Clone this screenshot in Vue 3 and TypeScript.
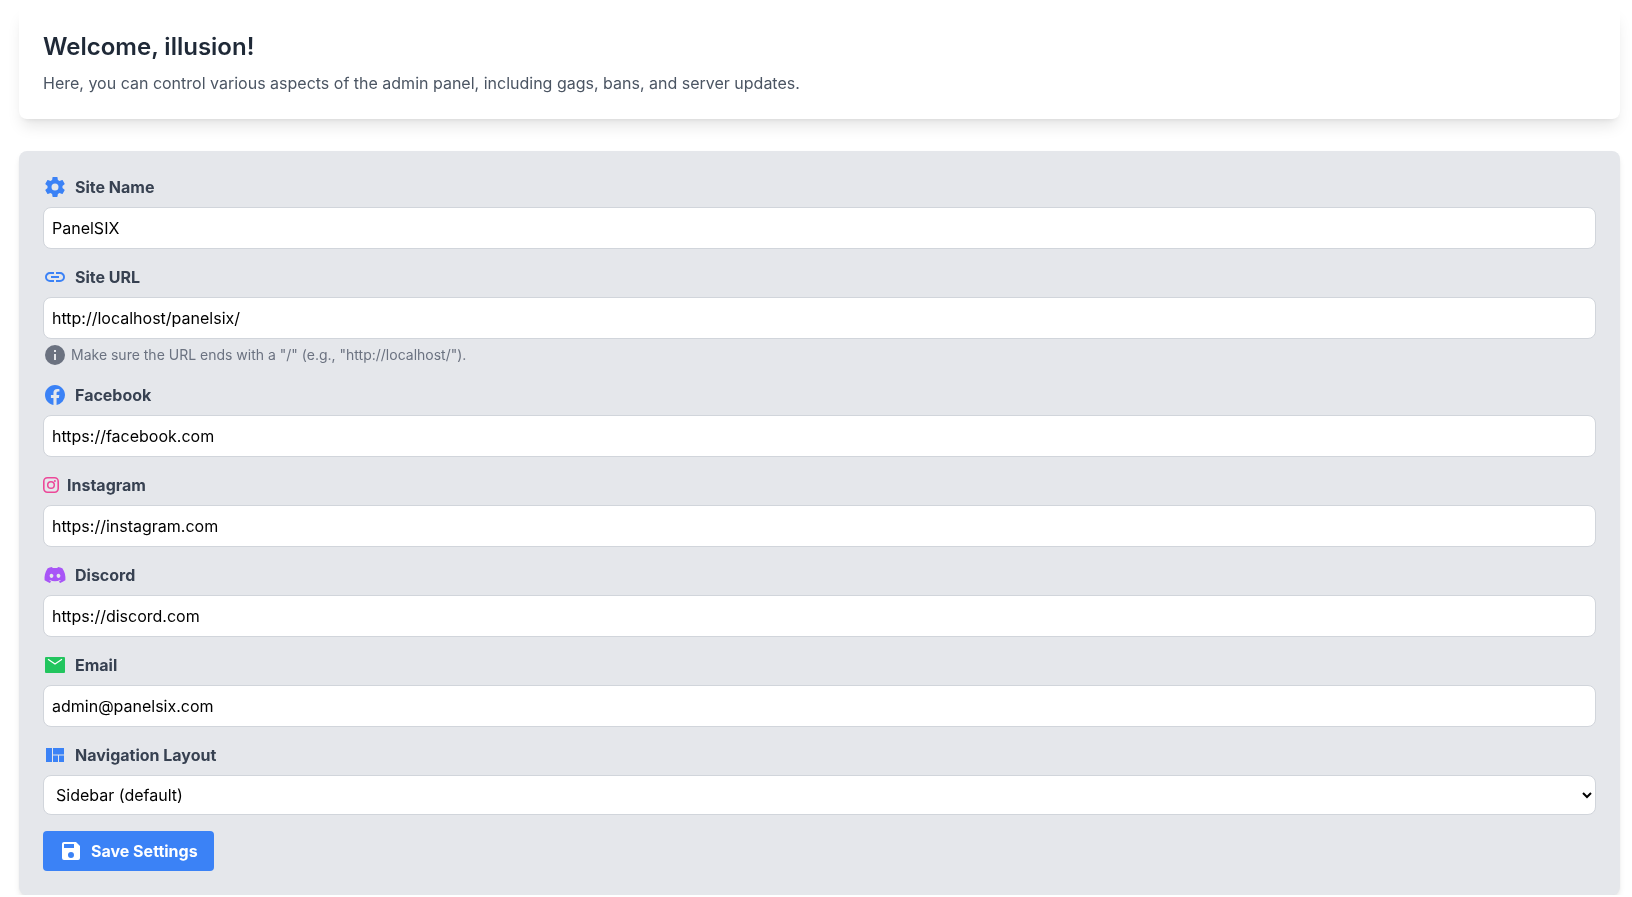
<script setup lang="ts">
interface Field {
  label: string
  value: string
  color: string
  path: string
  hint?: string
}

const infoPath = 'M13,9H11V7H13M13,17H11V11H13M12,2A10,10 0 0,0 2,12A10,10 0 0,0 12,22A10,10 0 0,0 22,12A10,10 0 0,0 12,2Z'
const layoutPath = 'M3 5h6v14H3zM10 5h11v6.4H10zM10 12.4h5v6.6h-5zM16 12.4h5v6.6h-5z'
const savePath = 'M15,9H5V5H15M12,19A3,3 0 0,1 9,16A3,3 0 0,1 12,13A3,3 0 0,1 15,16A3,3 0 0,1 12,19M17,3H5C3.89,3 3,3.9 3,5V19A2,2 0 0,0 5,21H19A2,2 0 0,0 21,19V7L17,3Z'

const firstFields: Field[] = [
  {
    label: 'Site Name',
    value: 'PanelSIX',
    color: '#3b82f6',
    path: 'M12,15.5A3.5,3.5 0 0,1 8.5,12A3.5,3.5 0 0,1 12,8.5A3.5,3.5 0 0,1 15.5,12A3.5,3.5 0 0,1 12,15.5M19.43,12.97C19.47,12.65 19.5,12.33 19.5,12C19.5,11.67 19.47,11.34 19.43,11L21.54,9.37C21.73,9.22 21.78,8.95 21.66,8.73L19.66,5.27C19.54,5.05 19.27,4.96 19.05,5.05L16.56,6.05C16.04,5.66 15.5,5.32 14.87,5.07L14.5,2.42C14.46,2.18 14.25,2 14,2H10C9.75,2 9.54,2.18 9.5,2.42L9.13,5.07C8.5,5.32 7.96,5.66 7.44,6.05L4.95,5.05C4.73,4.96 4.46,5.05 4.34,5.27L2.34,8.73C2.21,8.95 2.27,9.22 2.46,9.37L4.57,11C4.53,11.34 4.5,11.67 4.5,12C4.5,12.33 4.53,12.65 4.57,12.97L2.46,14.63C2.27,14.78 2.21,15.05 2.34,15.27L4.34,18.73C4.46,18.95 4.73,19.03 4.95,18.95L7.44,17.94C7.96,18.34 8.5,18.68 9.13,18.93L9.5,21.58C9.54,21.82 9.75,22 10,22H14C14.25,22 14.46,21.82 14.5,21.58L14.87,18.93C15.5,18.67 16.04,18.34 16.56,17.94L19.05,18.95C19.27,19.03 19.54,18.95 19.66,18.73L21.66,15.27C21.78,15.05 21.73,14.78 21.54,14.63L19.43,12.97Z',
  },
  {
    label: 'Site URL',
    value: 'http://localhost/panelsix/',
    color: '#3b82f6',
    path: 'M3.9,12C3.9,10.29 5.29,8.9 7,8.9H11V7H7A5,5 0 0,0 2,12A5,5 0 0,0 7,17H11V15.1H7C5.29,15.1 3.9,13.71 3.9,12M8,13H16V11H8V13M17,7H13V8.9H17C18.71,8.9 20.1,10.29 20.1,12C20.1,13.71 18.71,15.1 17,15.1H13V17H17A5,5 0 0,0 22,12A5,5 0 0,0 17,7Z',
    hint: 'Make sure the URL ends with a "/" (e.g., "http://localhost/").',
  },
  {
    label: 'Facebook',
    value: 'https://facebook.com',
    color: '#3b82f6',
    path: 'M12 2.04C6.5 2.04 2 6.53 2 12.06C2 17.06 5.66 21.21 10.44 21.96V14.96H7.9V12.06H10.44V9.85C10.44 7.34 11.93 5.96 14.22 5.96C15.31 5.96 16.45 6.15 16.45 6.15V8.62H15.19C13.95 8.62 13.56 9.39 13.56 10.18V12.06H16.34L15.89 14.96H13.56V21.96A10 10 0 0 0 22 12.06C22 6.53 17.5 2.04 12 2.04Z',
  },
]

const discordField: Field = {
  label: 'Discord',
  value: 'https://discord.com',
  color: '#a855f7',
  path: 'M19.27 5.33C17.94 4.71 16.5 4.26 15 4a.09.09 0 0 0-.07.03c-.18.33-.39.76-.53 1.09a16.09 16.09 0 0 0-4.8 0c-.14-.34-.35-.76-.54-1.09c-.01-.02-.04-.03-.07-.03c-1.5.26-2.93.71-4.27 1.33c-.01 0-.02.01-.03.02c-2.72 4.07-3.47 8.03-3.1 11.95c0 .02.01.04.03.05c1.8 1.32 3.53 2.12 5.24 2.65c.03.01.06 0 .07-.02c.4-.55.76-1.13 1.07-1.74c.02-.04 0-.08-.04-.09c-.57-.22-1.11-.48-1.64-.78c-.04-.02-.04-.08-.01-.11c.11-.08.22-.17.33-.25c.02-.02.05-.02.07-.01c3.44 1.57 7.15 1.57 10.55 0c.02-.01.05-.01.07.01c.11.09.22.17.33.26c.04.03.04.09-.01.11c-.52.31-1.07.56-1.64.78c-.04.01-.05.06-.04.09c.32.61.68 1.19 1.07 1.74c.03.01.06.02.09.01c1.72-.53 3.45-1.33 5.25-2.65c.02-.01.03-.03.03-.05c.44-4.53-.73-8.46-3.1-11.95c-.01-.01-.02-.02-.04-.02zM8.52 14.91c-1.03 0-1.89-.95-1.89-2.12s.84-2.12 1.89-2.12c1.06 0 1.9.96 1.89 2.12c0 1.17-.84 2.12-1.89 2.12zm6.97 0c-1.03 0-1.89-.95-1.89-2.12s.84-2.12 1.89-2.12c1.06 0 1.9.96 1.89 2.12c0 1.17-.83 2.12-1.89 2.12z',
}
</script>

<template>
  <main class="page">
    <section class="welcome">
      <h1>Welcome, illusion!</h1>
      <p>Here, you can control various aspects of the admin panel, including gags, bans, and server updates.</p>
    </section>

    <form class="settings" @submit.prevent>
      <div v-for="f in firstFields" :key="f.label" class="field">
        <label class="label">
          <svg class="icon" viewBox="0 0 24 24" :fill="f.color"><path :d="f.path" /></svg>
          {{ f.label }}
        </label>
        <input class="control" type="text" :value="f.value" />
        <div v-if="f.hint" class="hint">
          <svg class="icon" viewBox="0 0 24 24" fill="#6b7280"><path :d="infoPath" /></svg>
          <span>{{ f.hint }}</span>
        </div>
      </div>

      <div class="field">
        <label class="label">
          <svg class="icon-small" viewBox="0 0 16 16" fill="none" stroke="#ec4899">
            <rect x="0.8" y="0.8" width="14.4" height="14.4" rx="3.6" stroke-width="1.6" />
            <circle cx="8" cy="8" r="3.3" stroke-width="1.5" />
            <circle cx="11.9" cy="4.1" r="1" fill="#ec4899" stroke="none" />
          </svg>
          Instagram
        </label>
        <input class="control" type="text" value="https://instagram.com" />
      </div>

      <div class="field">
        <label class="label">
          <svg class="icon" viewBox="0 0 24 24" :fill="discordField.color"><path :d="discordField.path" /></svg>
          {{ discordField.label }}
        </label>
        <input class="control" type="text" :value="discordField.value" />
      </div>

      <div class="field">
        <label class="label">
          <svg class="icon" viewBox="0 0 24 24">
            <rect x="2" y="4" width="20" height="16" rx="1" fill="#22c55e" />
            <path d="M5 6.2 12 11 19 6.2" fill="none" stroke="#fff" stroke-width="1.2" />
          </svg>
          Email
        </label>
        <input class="control" type="text" value="admin@panelsix.com" />
      </div>

      <div class="field">
        <label class="label">
          <svg class="icon" viewBox="0 0 24 24" fill="#3b82f6"><path :d="layoutPath" /></svg>
          Navigation Layout
        </label>
        <select class="control select">
          <option>Sidebar (default)</option>
          <option>Topbar</option>
        </select>
      </div>

      <button class="save" type="submit">
        <svg class="icon" viewBox="0 0 24 24" fill="#fff"><path :d="savePath" /></svg>
        Save Settings
      </button>
    </form>
  </main>
</template>

<style>
body {
  background: #fff;
}
</style>

<style scoped>
.page {
  padding: 7px 12px 0 19px;
  display: flex;
  flex-direction: column;
  gap: 32px;
  font-family: Inter, "Liberation Sans", sans-serif;
  font-size: 16px;
  line-height: 24px;
  will-change: transform;
}
.welcome {
  background: #fff;
  border-radius: 8px;
  padding: 24px;
  box-shadow: 0 10px 15px -3px rgba(0, 0, 0, 0.1), 0 4px 6px -4px rgba(0, 0, 0, 0.1);
}
.welcome h1 {
  margin: 0 0 8px;
  font-size: 24px;
  line-height: 32px;
  font-weight: 600;
  color: #1f2937;
}
.welcome p {
  margin: 0;
  color: #4b5563;
}
.settings {
  background: #e5e7eb;
  border-radius: 8px;
  padding: 24px;
  display: flex;
  flex-direction: column;
  gap: 16px;
  box-shadow: 0 4px 6px -1px rgba(0, 0, 0, 0.1), 0 2px 4px -2px rgba(0, 0, 0, 0.1);
}
.field {
  display: flex;
  flex-direction: column;
  gap: 8px;
}
.label {
  display: flex;
  align-items: center;
  gap: 8px;
  height: 24px;
  font-weight: 700;
  color: #374151;
}
.icon {
  width: 24px;
  height: 24px;
  flex: none;
}
.icon-small {
  width: 16px;
  height: 16px;
  flex: none;
}
.control {
  box-sizing: border-box;
  width: 100%;
  height: 42px;
  padding: 8px;
  border: 1px solid #d1d5db;
  border-radius: 8px;
  background: #fff;
  color: #000;
  font: inherit;
  outline: none;
}
.select {
  height: 40px;
}
.hint {
  display: flex;
  align-items: center;
  gap: 4px;
  margin-top: -4px;
  font-size: 14px;
  color: #6b7280;
}
.save {
  align-self: flex-start;
  display: flex;
  align-items: center;
  gap: 8px;
  height: 40px;
  padding: 0 16px;
  border: 0;
  border-radius: 4px;
  background: #3b82f6;
  color: #fff;
  font: inherit;
  font-weight: 700;
}
</style>
